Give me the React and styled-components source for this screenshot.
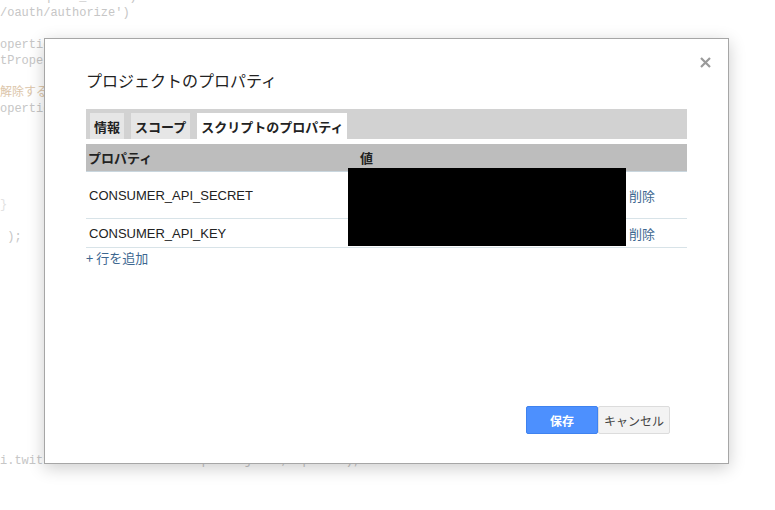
import React from "react";
import styled, { createGlobalStyle } from "styled-components";

const Global = createGlobalStyle`
  html, body { margin: 0; padding: 0; background: #fff; }
  body { width: 775px; height: 510px; overflow: hidden; position: relative; }
  * { box-sizing: border-box; }
`;

const Page = styled.div`
  position: relative;
  width: 775px;
  height: 510px;
  overflow: hidden;
  background: #fff;
`;

const Code = styled.div`
  margin-top: -11px;
  font-family: "Liberation Mono", "Noto Sans CJK JP", monospace;
  font-size: 12px;
  line-height: 16px;
  color: #c6c6c6;
  white-space: pre;
`;

const CodeLine = styled.div`
  height: 16px;
  color: ${(p) => (p.$comment ? "#dcc6aa" : p.$faint ? "#e2e2e2" : "#c6c6c6")};
`;

const Modal = styled.div`
  position: absolute;
  left: 44px;
  top: 38px;
  width: 685px;
  height: 426px;
  background: #fff;
  border: 1px solid #a6a6a6;
  box-shadow: 0 4px 16px rgba(0, 0, 0, 0.2);
  display: flex;
  flex-direction: column;
  padding: 31px 41px 29px 41px;
  font-family: "Liberation Sans", "Noto Sans CJK JP", sans-serif;
  color: #222;
`;

const Close = styled.button`
  position: absolute;
  top: 16px;
  right: 16px;
  width: 14px;
  height: 14px;
  padding: 0;
  border: 0;
  background: transparent;
  display: flex;
  align-items: center;
  justify-content: center;
  cursor: pointer;
`;

const Title = styled.div`
  font-family: "Noto Sans CJK JP", sans-serif;
  font-size: 16px;
  line-height: 20px;
  color: #222;
  margin: 0 0 19px 0;
`;

const TabBar = styled.div`
  display: flex;
  align-items: flex-end;
  gap: 7px;
  height: 30px;
  background: #d2d2d2;
  padding: 4px 4px 0 4px;
`;

const Tab = styled.div`
  height: 26px;
  padding: 0 4px;
  display: flex;
  align-items: center;
  font-family: "Noto Sans CJK JP", sans-serif;
  font-size: 13px;
  font-weight: 700;
  color: #222;
  background: ${(p) => (p.$active ? "#fff" : "#e6e6e6")};
`;

const Table = styled.div`
  position: relative;
  margin-top: 5px;
  display: flex;
  flex-direction: column;
`;

const HeaderRow = styled.div`
  display: grid;
  grid-template-columns: 270px 1fr;
  height: 28px;
  align-items: center;
  background: #bdbdbd;
  border-bottom: 1px solid #c9d6de;
  font-family: "Noto Sans CJK JP", sans-serif;
  font-size: 13px;
  font-weight: 700;
  color: #222;
  padding-left: 2px;
`;

const HeadCell = styled.div`
  padding-left: ${(p) => p.$pad || 0}px;
`;

const Row = styled.div`
  display: grid;
  grid-template-columns: 262px 278px 1fr;
  height: ${(p) => p.$h}px;
  align-items: center;
  border-bottom: 1px solid #d8e3e8;
  font-size: 13px;
`;

const KeyCell = styled.div`
  padding-left: 3px;
  font-family: "Liberation Sans", sans-serif;
  color: #222;
`;

const ValueCell = styled.div``;

const LinkText = styled.a`
  font-family: "Noto Sans CJK JP", sans-serif;
  font-size: 13px;
  color: #3d6790;
  text-decoration: none;
  padding-left: ${(p) => p.$pad || 0}px;
  cursor: pointer;
`;

const AddRow = styled.div`
  height: 17px;
  display: flex;
  align-items: center;
  margin-top: 1px;
`;

const Redaction = styled.div`
  position: absolute;
  left: 262px;
  top: 24px;
  width: 278px;
  height: 78px;
  background: #000;
`;

const Footer = styled.div`
  margin-top: auto;
  display: flex;
  justify-content: flex-end;
  padding-right: 17px;
`;

const Button = styled.button`
  width: 72px;
  height: 28px;
  border-radius: 2px;
  font-family: "Noto Sans CJK JP", sans-serif;
  font-size: 12px;
  font-weight: ${(p) => (p.$primary ? 700 : 400)};
  color: ${(p) => (p.$primary ? "#fff" : "#444")};
  background: ${(p) => (p.$primary ? "#4d90fe" : "#f3f3f3")};
  border: 1px solid ${(p) => (p.$primary ? "#3f82ef" : "#dcdcdc")};
  padding: 0;
  cursor: pointer;
`;

const codeLines = [
  { t: "uth/request_token')" },
  { t: "/oauth/authorize')" },
  { t: "" },
  { t: "operties();" },
  { t: "tProperties();" },
  { t: "" },
  { t: "解除する", comment: true },
  { t: "operties();" },
  { t: "" },
  { t: "" },
  { t: "" },
  { t: "" },
  { t: "" },
  { t: "}", faint: true },
  { t: "" },
  { t: " );" },
  ...Array.from({ length: 13 }, () => ({ t: "" })),
  { t: "i.twitter.com/1.1/statuses/update.json', options);" },
];

export default function App() {
  return (
    <Page>
      <Global />
      <Code>
        {codeLines.map((l, i) => (
          <CodeLine key={i} $comment={l.comment} $faint={l.faint}>
            {l.t || " "}
          </CodeLine>
        ))}
      </Code>
      <Modal>
        <Close aria-label="close">
          <svg width="11" height="11" viewBox="0 0 11 11">
            <path d="M1 1 L10 10 M10 1 L1 10" stroke="#9a9a9a" strokeWidth="2.2" />
          </svg>
        </Close>
        <Title>プロジェクトのプロパティ</Title>
        <TabBar>
          <Tab>情報</Tab>
          <Tab>スコープ</Tab>
          <Tab $active>スクリプトのプロパティ</Tab>
        </TabBar>
        <Table>
          <HeaderRow>
            <HeadCell>プロパティ</HeadCell>
            <HeadCell $pad={2}>値</HeadCell>
          </HeaderRow>
          <Row $h={47}>
            <KeyCell>CONSUMER_API_SECRET</KeyCell>
            <ValueCell />
            <LinkText $pad={3}>削除</LinkText>
          </Row>
          <Row $h={29}>
            <KeyCell>CONSUMER_API_KEY</KeyCell>
            <ValueCell />
            <LinkText $pad={3}>削除</LinkText>
          </Row>
          <AddRow>
            <LinkText>+ 行を追加</LinkText>
          </AddRow>
          <Redaction />
        </Table>
        <Footer>
          <Button $primary>保存</Button>
          <Button>キャンセル</Button>
        </Footer>
      </Modal>
    </Page>
  );
}
